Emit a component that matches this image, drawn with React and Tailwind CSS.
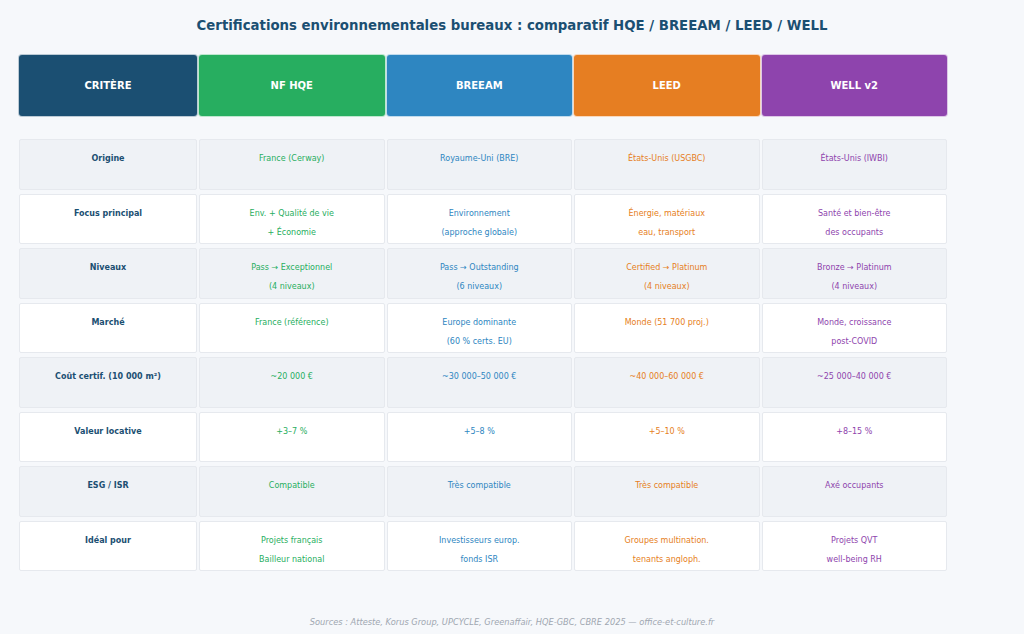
const COLS = [
  { name: "NF HQE", bg: "bg-[#27ae60]", text: "text-[#27ae60]" },
  { name: "BREEAM", bg: "bg-[#2e86c1]", text: "text-[#2e86c1]" },
  { name: "LEED", bg: "bg-[#e67e22]", text: "text-[#e67e22]" },
  { name: "WELL v2", bg: "bg-[#8e44ad]", text: "text-[#8e44ad]" },
];

const ROWS = [
  { label: "Origine", cells: [["France (Cerway)"], ["Royaume-Uni (BRE)"], ["États-Unis (USGBC)"], ["États-Unis (IWBI)"]] },
  { label: "Focus principal", cells: [["Env. + Qualité de vie", "+ Économie"], ["Environnement", "(approche globale)"], ["Énergie, matériaux", "eau, transport"], ["Santé et bien-être", "des occupants"]] },
  { label: "Niveaux", cells: [["Pass → Exceptionnel", "(4 niveaux)"], ["Pass → Outstanding", "(6 niveaux)"], ["Certified → Platinum", "(4 niveaux)"], ["Bronze → Platinum", "(4 niveaux)"]] },
  { label: "Marché", cells: [["France (référence)"], ["Europe dominante", "(60 % certs. EU)"], ["Monde (51 700 proj.)"], ["Monde, croissance", "post-COVID"]] },
  { label: "Coût certif. (10 000 m²)", cells: [["~20 000 €"], ["~30 000–50 000 €"], ["~40 000–60 000 €"], ["~25 000–40 000 €"]] },
  { label: "Valeur locative", cells: [["+3–7 %"], ["+5–8 %"], ["+5–10 %"], ["+8–15 %"]] },
  { label: "ESG / ISR", cells: [["Compatible"], ["Très compatible"], ["Très compatible"], ["Axé occupants"]] },
  { label: "Idéal pour", cells: [["Projets français", "Bailleur national"], ["Investisseurs europ.", "fonds ISR"], ["Groupes multination.", "tenants angloph."], ["Projets QVT", "well-being RH"]] },
];

function HeaderCell({ bg, children }) {
  return (
    <div className={`${bg} h-[63px] flex items-center justify-center rounded-[4px] border border-white/70 text-white font-bold text-[10px]`}>
      {children}
    </div>
  );
}

function Cell({ shade, className, lines }) {
  return (
    <div className={`mx-px h-[50.5px] my-[2px] rounded-[2px] border border-[#e6e9ee] ${shade ? "bg-[#eff2f6]" : "bg-white"} pt-[9px] text-center text-[8px] leading-[19px] ${className}`}>
      {lines.map((l, i) => (
        <div key={i}>{l}</div>
      ))}
    </div>
  );
}

export default function App() {
  return (
    <div className="w-[1024px] h-[634px] bg-[#f6f8fb] relative" style={{ fontFamily: '"DejaVu Sans", sans-serif' }}>
      <h1 className="pt-[16px] text-center text-[13.3px] font-bold text-[#1b4f72] leading-[20px]">
        Certifications environnementales bureaux : comparatif HQE / BREEAM / LEED / WELL
      </h1>
      <div className="ml-[18px] mt-[18px] w-[930px]">
        <div className="grid grid-cols-[180px_187.5px_187.5px_187.5px_187.5px]">
          <HeaderCell bg="bg-[#1b4f72]">CRITÈRE</HeaderCell>
          {COLS.map((c) => (
            <HeaderCell key={c.name} bg={c.bg}>{c.name}</HeaderCell>
          ))}
        </div>
        <div className="mt-[20px] grid grid-cols-[180px_187.5px_187.5px_187.5px_187.5px]">
          {ROWS.map((r, ri) => (
            <div key={r.label} className="contents">
              <Cell shade={ri % 2 === 0} className="font-bold text-[#1b4f72]" lines={[r.label]} />
              {r.cells.map((lines, ci) => (
                <Cell key={ci} shade={ri % 2 === 0} className={COLS[ci].text} lines={lines} />
              ))}
            </div>
          ))}
        </div>
      </div>
      <div className="absolute left-0 right-0 top-[616px] text-center text-[8.25px] italic text-[#a0a7b1]">
        Sources : Atteste, Korus Group, UPCYCLE, Greenaffair, HQE-GBC, CBRE 2025 — office-et-culture.fr
      </div>
    </div>
  );
}
